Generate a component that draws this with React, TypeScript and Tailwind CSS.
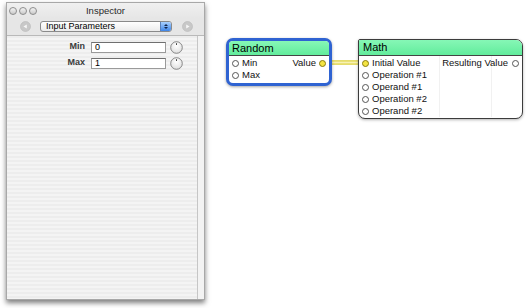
import React from 'react';

const ui = { fontFamily: '"Liberation Sans", Arial, sans-serif' };

const Light = () => (
  <span className="block w-[8px] h-[8px] rounded-full border border-[#8e8e8e] bg-[linear-gradient(#f4f4f4,#c9c9c9)]" />
);

const NavButton = ({ dir }: { dir: 'left' | 'right' }) => (
  <svg width="11" height="11" viewBox="0 0 11 11">
    <circle cx="5.5" cy="5.5" r="5" fill="#c8c8c8" stroke="#b8b8b8" strokeWidth="0.6" />
    {dir === 'left' ? (
      <path d="M3.4 5.5 L6.8 3.4 L6.8 7.6 Z" fill="#f6f6f6" />
    ) : (
      <path d="M7.6 5.5 L4.2 3.4 L4.2 7.6 Z" fill="#f6f6f6" />
    )}
  </svg>
);

const Knob = () => (
  <svg width="13" height="13" viewBox="0 0 13 13">
    <defs>
      <radialGradient id="kg" cx="0.5" cy="0.35" r="0.7">
        <stop offset="0" stopColor="#ffffff" />
        <stop offset="1" stopColor="#dcdcdc" />
      </radialGradient>
    </defs>
    <circle cx="6.5" cy="6.5" r="5.8" fill="url(#kg)" stroke="#6e6e6e" strokeWidth="0.8" />
    <path d="M6.5 2.2 L6.5 4" stroke="#333" strokeWidth="0.9" />
  </svg>
);

const ParamRow = ({ label, value }: { label: string; value: string }) => (
  <div className="flex items-center h-[16px]">
    <span className="w-[79px] text-right text-[9px] font-bold text-[#3a3a3a] pr-[1px]">{label}</span>
    <div className="ml-[5px] w-[75px] h-[11px] bg-white border border-[#9a9a9a] border-t-[#6f6f6f] flex items-center pl-[3px] text-[9px] text-black leading-none">
      {value}
    </div>
    <div className="ml-[4px] flex items-center">
      <Knob />
    </div>
  </div>
);

const Inspector = () => (
  <div
    className="ml-[6px] mt-[2px] w-[199px] h-[298px] flex flex-col border border-[#a8a8a8] bg-[#e9e9e9] shadow-[0_3px_5px_rgba(0,0,0,0.5)]"
    style={ui}
  >
    {/* title bar */}
    <div className="relative h-[15px] flex items-center bg-[linear-gradient(#f0f0f0,#e6e6e6)]">
      <div className="flex items-center gap-[2px] pl-[2px]">
        <Light />
        <Light />
        <Light />
      </div>
      <span className="absolute inset-x-0 text-center text-[9.5px] text-[#2a2a2a] leading-none">Inspector</span>
    </div>
    {/* toolbar */}
    <div className="h-[18px] flex items-center bg-[#e6e6e6] border-b border-[#b9b9b9]">
      <div className="ml-[13px] flex items-center">
        <NavButton dir="left" />
      </div>
      <div className="ml-[9px] w-[132px] h-[11px] flex items-center rounded-[3px] border border-[#8a8a8a] bg-[linear-gradient(#ffffff,#ececec)] overflow-hidden">
        <span className="flex-1 pl-[5px] text-[9px] text-black leading-none">Input Parameters</span>
        <span className="w-[11px] h-full flex flex-col items-center justify-center gap-[1px] bg-[linear-gradient(#a9d0ff,#3f86e8)] border-l border-[#5a7fb8]">
          <svg width="4" height="2" viewBox="0 0 4 2">
            <path d="M0 2 L2 0 L4 2 Z" fill="#10244a" />
          </svg>
          <svg width="4" height="2" viewBox="0 0 4 2">
            <path d="M0 0 L2 2 L4 0 Z" fill="#10244a" />
          </svg>
        </span>
      </div>
      <div className="ml-[10px] flex items-center">
        <NavButton dir="right" />
      </div>
    </div>
    {/* content */}
    <div className="flex-1 flex">
      <div className="flex-1 border-r border-[#c6c6c6] bg-[repeating-linear-gradient(#ededed_0px,#ededed_2px,#f4f4f4_2px,#f4f4f4_4px)] pt-[3px]">
        <ParamRow label="Min" value="0" />
        <ParamRow label="Max" value="1" />
      </div>
      <div className="w-[6px] bg-[#f3f3f3]" />
    </div>
  </div>
);

const Port = ({ active }: { active?: boolean }) => (
  <span
    className={
      active
        ? 'inline-block w-[7px] h-[7px] rounded-full border border-[#8a7c10] bg-[#f3e443]'
        : 'inline-block w-[7px] h-[7px] rounded-full border border-[#555] bg-white'
    }
  />
);

const InputRow = ({ label, active }: { label: string; active?: boolean }) => (
  <div className="flex items-center h-[12px] gap-[3px] pl-[3px]">
    <Port active={active} />
    <span className="text-[9.5px] text-[#111] leading-none">{label}</span>
  </div>
);

const RandomPatch = () => (
  <div
    className="absolute left-[226px] top-[38px] w-[106px] h-[48px] rounded-[7px] border-[3px] border-[#2f63d2] bg-white overflow-hidden shadow-[0_1px_3px_rgba(0,0,0,0.35)]"
    style={ui}
  >
    <div className="h-[15px] flex items-center pl-[3px] bg-[linear-gradient(#86f7b6,#62ec9c)] border-b border-[#444] text-[11px] text-black leading-none">
      Random
    </div>
    <div className="flex">
      <div className="flex-1 pt-[1px]">
        <InputRow label="Min" />
        <InputRow label="Max" />
      </div>
      <div className="pt-[1px] pr-[3px]">
        <div className="flex items-center h-[12px] gap-[3px]">
          <span className="text-[9.5px] text-[#111] leading-none">Value</span>
          <Port active />
        </div>
      </div>
    </div>
  </div>
);

const MathPatch = () => (
  <div
    className="absolute left-[358px] top-[39px] w-[165px] h-[80px] rounded-tr-[7px] rounded-b-[7px] rounded-tl-[2px] border border-[#3c3c3c] bg-white overflow-hidden shadow-[0_1px_3px_rgba(0,0,0,0.3)]"
    style={ui}
  >
    <div className="h-[16px] flex items-center pl-[4px] bg-[linear-gradient(#86f7b6,#62ec9c)] border-b border-[#444] text-[11px] text-black leading-none">
      Math
    </div>
    <div className="relative flex">
      <div className="absolute top-0 bottom-0 left-[80px] border-l border-[#f1f1f1]" />
      <div className="absolute top-0 bottom-0 left-[132px] border-l border-[#f1f1f1]" />
      <div className="flex-1 pt-[1px]">
        <InputRow label="Initial Value" active />
        <InputRow label="Operation #1" />
        <InputRow label="Operand #1" />
        <InputRow label="Operation #2" />
        <InputRow label="Operand #2" />
      </div>
      <div className="relative pt-[1px] pr-[3px]">
        <div className="flex items-center h-[12px] gap-[4px]">
          <span className="text-[9.5px] text-[#111] leading-none">Resulting Value</span>
          <Port />
        </div>
      </div>
    </div>
  </div>
);

const Connection = () => (
  <svg className="absolute left-[328px] top-[58px]" width="36" height="9" viewBox="0 0 36 9">
    <path d="M0 4.5 L36 4.5" stroke="#ddd03c" strokeWidth="4.4" />
    <path d="M0 4.5 L36 4.5" stroke="#f7f1b4" strokeWidth="1.8" />
  </svg>
);

export default function App() {
  return (
    <div className="relative w-[531px] h-[308px] bg-white overflow-hidden">
      <Inspector />
      <Connection />
      <RandomPatch />
      <MathPatch />
    </div>
  );
}
